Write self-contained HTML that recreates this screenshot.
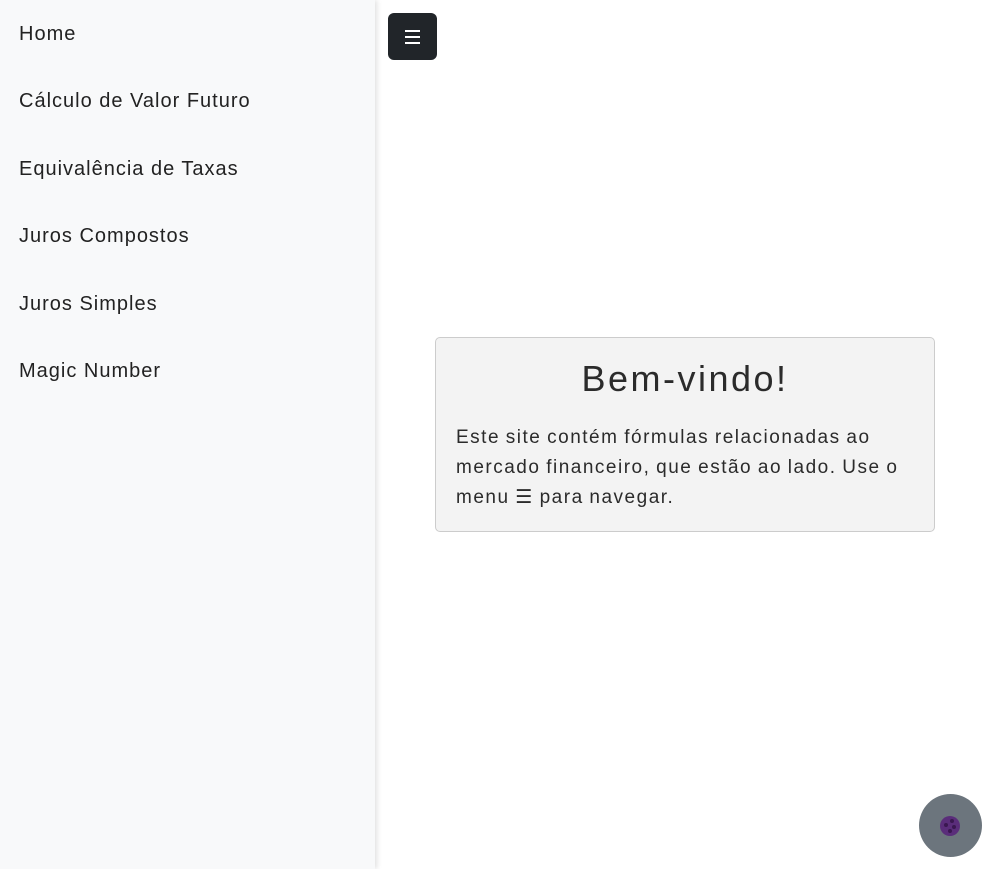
<!DOCTYPE html>
<html><head><meta charset="utf-8"><style>
body{margin:0;width:994px;height:869px;background:#fff;font-family:"Liberation Sans",sans-serif;position:relative;overflow:hidden}
.side{position:absolute;left:0;top:0;width:375px;height:869px;background:#f8f9fa;box-shadow:2px 0 5px rgba(0,0,0,.12)}
.side a{position:absolute;left:19px;font-size:20px;letter-spacing:1px;color:#222;text-decoration:none}
.btn{position:absolute;left:388px;top:13px;width:49px;height:47px;background:#212529;border-radius:6px;color:#fff;display:flex;align-items:center;justify-content:center}
.btn i{display:block;width:15px;height:2px;background:#fff;box-shadow:0 -6px 0 #fff,0 6px 0 #fff}
.card{position:absolute;left:435px;top:337px;width:500px;height:195px;background:#f3f3f3;border:1px solid #ccc;border-radius:5px;box-sizing:border-box;color:#2b2b2b}
.card h1{margin:0;position:absolute;top:20px;width:100%;text-align:center;font-weight:normal;font-size:36px;letter-spacing:2.5px}
.card p{margin:0;position:absolute;left:20px;top:85px;width:470px;font-size:19px;line-height:30px;letter-spacing:1.5px;word-spacing:-1px;white-space:nowrap}
.fab{position:absolute;left:919px;top:794px;width:63px;height:63px;border-radius:50%;background:#6c757d}
.fab b{position:absolute;left:21px;top:22px;width:20px;height:20px;border-radius:50%;background:#5a2d7a}
.fab s{position:absolute;width:4px;height:4px;border-radius:50%;background:#3a1850}
</style></head><body>
<div class="side">
<a style="top:23px">Home</a>
<a style="top:90px">Cálculo de Valor Futuro</a>
<a style="top:158px">Equivalência de Taxas</a>
<a style="top:225px">Juros Compostos</a>
<a style="top:293px">Juros Simples</a>
<a style="top:360px">Magic Number</a>
</div>
<div class="btn"><i></i></div>
<div class="card"><h1>Bem-vindo!</h1><p>Este site contém fórmulas relacionadas ao<br>mercado financeiro, que estão ao lado. Use o<br>menu ☰ para navegar.</p></div>
<div class="fab"><b><s style="left:4px;top:7px"></s><s style="left:10px;top:3px"></s><s style="left:12px;top:9px"></s><s style="left:8px;top:13px"></s></b></div>
</body></html>
